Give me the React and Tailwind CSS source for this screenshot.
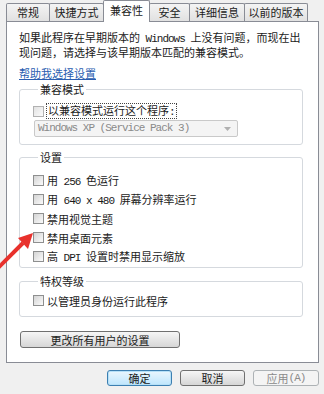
const tabs = [
    { label: "常规", w: "w-[44px]" },
    { label: "快捷方式", w: "w-[55px]" },
    { label: "兼容性", w: "w-[47px]", active: true },
    { label: "安全", w: "w-[41px]" },
    { label: "详细信息", w: "w-[56px]" },
    { label: "以前的版本", w: "w-[64px]" },
];

function M({ children }) {
    return <span className="font-['Liberation_Mono',monospace] tracking-[-1px]">{children}</span>;
}

function Check({ children }) {
    return (
        <div className="flex items-center h-[19px]">
            <span className="w-[11px] h-[11px] shrink-0 border border-[#8e8f8f] bg-linear-to-br from-[#d4d4d4] to-[#fbfbfb]" />
            <span className="ml-[3px] leading-[12px]">{children}</span>
        </div>
    );
}

function Group({ title, className, children }) {
    return (
        <fieldset className={`w-[284px] border border-[#d5d9de] rounded-[3px] pl-[13px] ${className}`}>
            <legend className="ml-[5px] px-[2px] leading-[12px]">{title}</legend>
            {children}
        </fieldset>
    );
}

function Button({ children, className }) {
    return (
        <button className={`h-[16px] rounded-[3px] border text-[11px] leading-[12px] flex items-center justify-center ${className}`}>
            {children}
        </button>
    );
}

export default function App() {
    return (
        <div className="relative w-[324px] h-[394px] overflow-hidden bg-[#f0f0f0] text-[11px] text-[#1b1b1b] font-['Noto_Sans_CJK_SC',sans-serif]">
            <div className="flex items-end h-[21px] pl-[6px]">
                {tabs.map((t, i) => (
                    <div
                        key={t.label}
                        className={`${t.w} ${i > 0 ? "-ml-px" : ""} flex items-center justify-center border-t border-l border-r border-[#898c95] rounded-t-[2px] ${
                            t.active ? "relative z-10 h-[22px] -mb-px bg-white pb-[3px]" : "h-[18px] bg-linear-to-b from-[#f4f4f4] to-[#e1e1e1]"
                        }`}
                    >
                        {t.label}
                    </div>
                ))}
            </div>

            <div className="ml-[6px] w-[313px] h-[342px] border border-[#898c95] bg-white px-[12px] pt-[9px] flex flex-col items-start">
                <p className="leading-[13px]">
                    如果此程序在早期版本的<M> Windows </M>上没有问题，而现在出
                    <br />
                    现问题，请选择与该早期版本匹配的兼容模式。
                </p>
                <a href="#" className="mt-[8px] leading-[12px] text-[#2a5db0] underline">帮助我选择设置</a>

                <Group title="兼容模式" className="mt-[4px] pb-[7px]">
                    <div className="mt-[9px] flex items-center h-[14px]">
                        <span className="w-[11px] h-[11px] shrink-0 border border-[#b1b1b1] bg-linear-to-br from-[#e2e2e2] to-[#fbfbfb]" />
                        <span className="ml-[2px] px-px leading-[12px] border border-dotted border-[#444]">以兼容模式运行这个程序<M>:</M></span>
                    </div>
                    <div className="mt-[2px] ml-px w-[204px] h-[17px] border border-[#c9c9c9] rounded-[2px] bg-[#f4f4f4] flex items-center justify-between px-[3px] text-[#8a8a8a]">
                        <span className="font-['Liberation_Mono',monospace] tracking-[-1px] text-[11px]">Windows XP (Service Pack 3)</span>
                        <svg width="7" height="4" viewBox="0 0 7 4" className="mr-[3px]">
                            <path d="M0 0h7L3.5 4z" fill="#b0b0b0" />
                        </svg>
                    </div>
                </Group>

                <Group title="设置" className="mt-[6px] pb-px">
                    <div className="mt-[8px]">
                        <Check>用<M> 256 </M>色运行</Check>
                        <Check>用<M> 640 x 480 </M>屏幕分辨率运行</Check>
                        <Check>禁用视觉主题</Check>
                        <Check>禁用桌面元素</Check>
                        <Check>高<M> DPI </M>设置时禁用显示缩放</Check>
                    </div>
                </Group>

                <Group title="特权等级" className="mt-[7px] pb-[6px]">
                    <div className="mt-[4px]">
                        <Check>以管理员身份运行此程序</Check>
                    </div>
                </Group>

                <Button className="mt-[14px] ml-px w-[160px] h-[17px] border-[#707070] bg-linear-to-b from-[#f6f6f6] to-[#d6d6d6]">
                    更改所有用户的设置
                </Button>
            </div>

            <div className="mt-[7px] flex justify-end gap-[8px] pr-[5px]">
                <Button className="w-[65px] border-[#3c7fb1] bg-linear-to-b from-[#eaf6fd] to-[#bee6fd] shadow-[inset_0_0_0_1px_#b6e0f7]">确定</Button>
                <Button className="w-[65px] border-[#707070] bg-linear-to-b from-[#f6f6f6] to-[#d6d6d6]">取消</Button>
                <Button className="w-[66px] border-[#adb2b5] bg-[#f4f4f4] text-[#8a8a8a]">应用<M> (A)</M></Button>
            </div>

            <svg width="40" height="50" viewBox="0 0 40 50" className="absolute left-0 top-[225px]">
                <line x1="-2" y1="43" x2="23" y2="18" stroke="#e8312c" strokeWidth="4" />
                <polygon points="33,8 18,13 28,24" fill="#e8312c" />
            </svg>
        </div>
    );
}
